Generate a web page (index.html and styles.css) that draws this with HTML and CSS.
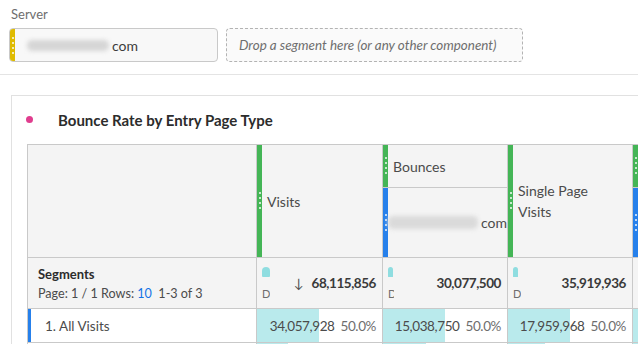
FILE: index.html
```html
<!DOCTYPE html>
<html lang="en">
<head>
  <meta charset="UTF-8" />
  <title>Bounce Rate by Entry Page Type</title>
  <link rel="stylesheet" href="styles.css">
</head>
<body>
  <div class="filters">
    <div class="filter-label">Server</div>
    <div class="filter-row">
      <div class="pill">
        <span class="pill-bar"><span class="grip"></span></span>
        <span class="blur blur-pill"></span>
        <span class="pill-text">com</span>
      </div>
      <div class="dropzone">Drop a segment here (or any other component)</div>
    </div>
  </div>

  <div class="panel">
    <div class="panel-title">
      <span class="dot"></span>
      <span>Bounce Rate by Entry Page Type</span>
    </div>

    <div class="table">
      <div class="cell head corner"></div>

      <div class="cell head span2">
        <span class="cbar green"><span class="grip"></span></span>
        <span class="head-label">Visits</span>
      </div>

      <div class="cell head">
        <span class="cbar green"><span class="grip"></span></span>
        <span class="head-label">Bounces</span>
      </div>

      <div class="cell head span2">
        <span class="cbar green"><span class="grip"></span></span>
        <span class="head-label two-line">Single Page<br>Visits</span>
      </div>

      <div class="cell head">
        <span class="cbar green"><span class="grip"></span></span>
      </div>

      <div class="cell head">
        <span class="cbar blue"><span class="grip"></span></span>
        <span class="head-label seg-label"><span class="blur blur-head"></span>com</span>
      </div>

      <div class="cell head">
        <span class="cbar blue"><span class="grip"></span></span>
      </div>

      <!-- summary row -->
      <div class="cell summary seg-info">
        <div class="seg-title">Segments</div>
        <div class="seg-pages">Page: 1 / 1 Rows: <span class="link">10</span>&nbsp;&nbsp;1-3 of 3</div>
      </div>
      <div class="cell summary total">
        <div class="mini"><span class="mini-icon"></span><span class="mini-text">De</span></div>
        <span class="sort">&#8595;</span>
        <span class="total-num">68,115,856</span>
      </div>
      <div class="cell summary total">
        <div class="mini narrow"><span class="mini-icon slim"></span><span class="mini-text">D</span></div>
        <span class="total-num">30,077,500</span>
      </div>
      <div class="cell summary total">
        <div class="mini"><span class="mini-icon slim"></span><span class="mini-text">D</span></div>
        <span class="total-num">35,919,936</span>
      </div>
      <div class="cell summary total"></div>

      <!-- data rows -->
      <div class="cell row-name selected">1. All Visits</div>
      <div class="cell value half"><span>34,057,928</span><span class="pct">50.0%</span></div>
      <div class="cell value half"><span>15,038,750</span><span class="pct">50.0%</span></div>
      <div class="cell value half"><span>17,959,968</span><span class="pct">50.0%</span></div>
      <div class="cell value half"></div>

      <div class="cell row-name"></div>
      <div class="cell value quarter"></div>
      <div class="cell value third"></div>
      <div class="cell value low"></div>
      <div class="cell value low"></div>
    </div>
  </div>
</body>
</html>
```

FILE: styles.css
```css
body {
  margin: 0;
  font-family: Lato, "Open Sans", sans-serif;
  color: #4b4b4b;
  background: #fff;
  overflow: hidden;
  width: 638px;
  height: 344px;
}

/* filter bar */
.filters {
  padding: 6px 0 12px 11px;
  border-bottom: 1px solid #e4e4e4;
}
.filter-label {
  font-size: 13px;
  line-height: 16px;
  color: #6e6e6e;
  margin-bottom: 6px;
}
.filter-row {
  display: flex;
  gap: 8px;
  margin-left: -2px;
}
.pill {
  width: 209px;
  height: 34px;
  box-sizing: border-box;
  display: flex;
  align-items: center;
  border: 1px solid #c9c9c9;
  border-radius: 4px;
  background: #f8f8f8;
  overflow: hidden;
}
.pill-bar {
  align-self: stretch;
  width: 5px;
  background: #dfbb00;
  display: flex;
  align-items: center;
  justify-content: center;
}
.pill-bar .grip {
  height: 17px;
}
.pill-text {
  font-size: 14px;
  color: #3c3c3c;
}
.blur {
  display: inline-block;
  background: #d6d6d6;
  filter: blur(2px);
  border-radius: 5px;
}
.blur-pill {
  width: 82px;
  height: 11px;
  margin: 0 3px 0 12px;
}
.dropzone {
  width: 297px;
  height: 34px;
  box-sizing: border-box;
  border: 1px dashed #b3b3b3;
  border-radius: 4px;
  background: #fafafa;
  display: flex;
  align-items: center;
  padding-left: 12px;
  font-size: 13.4px;
  font-style: italic;
  color: #6e6e6e;
}

/* panel */
.panel {
  margin: 20px 0 0 11px;
  width: 700px;
  border: 1px solid #e1e1e1;
}
.panel-title {
  height: 48px;
  display: flex;
  align-items: center;
  padding-left: 14px;
  font-size: 15px;
  font-weight: bold;
  color: #2c2c2c;
}
.dot {
  width: 7px;
  height: 7px;
  border-radius: 50%;
  background: #e03d8e;
  margin-right: 25px;
  margin-top: -2px;
}

/* table */
.table {
  margin-left: 15px;
  display: grid;
  grid-template-columns: 229px 126px 125px 125px 125px;
  grid-template-rows: 43px 70px 51px 34px 34px;
  border-top: 1px solid #c9c9c9;
}
.cell {
  border-left: 1px solid #c9c9c9;
  border-bottom: 1px solid #c9c9c9;
  box-sizing: border-box;
  overflow: hidden;
  white-space: nowrap;
}
.head {
  background: #f4f4f4;
  display: flex;
  font-size: 14px;
  color: #4b4b4b;
}
.corner,
.span2 {
  grid-row: span 2;
}
.cbar {
  width: 5px;
  flex-shrink: 0;
  display: flex;
  align-items: center;
  justify-content: center;
}
.green {
  background: #44b556;
}
.blue {
  background: #2680eb;
}
.grip {
  width: 2px;
  height: 18px;
  background: repeating-linear-gradient(to bottom, rgba(255, 255, 255, 0.7) 0 2px, transparent 2px 5px);
}
.head-label {
  display: flex;
  align-items: center;
  padding-left: 5px;
  line-height: 21px;
}
.two-line {
  white-space: normal;
}
.seg-label {
  padding-left: 0;
}
.blur-head {
  width: 90px;
  height: 13px;
  margin-right: 3px;
  background: #dadada;
}

/* summary row */
.summary {
  background: #f4f4f4;
}
.seg-info {
  padding: 8px 0 0 10px;
  font-size: 12.6px;
}
.seg-title {
  font-weight: bold;
  font-size: 13px;
  color: #2c2c2c;
  line-height: 16px;
}
.seg-pages {
  margin-top: 4px;
  line-height: 16px;
}
.link {
  color: #1473e6;
}
.total {
  display: flex;
  align-items: center;
  padding: 0 6px 0 5px;
}
.mini {
  width: 8px;
  align-self: stretch;
  display: flex;
  flex-direction: column;
  padding-top: 9px;
  overflow: hidden;
}
.mini.narrow {
  width: 6px;
}
.mini-icon {
  width: 8px;
  height: 10px;
  border-radius: 4px 4px 1px 1px;
  background: #8fdde0;
}
.mini-icon.slim {
  width: 5px;
}
.mini-text {
  font-size: 11px;
  line-height: 12px;
  color: #6e6e6e;
  margin-top: 11px;
}
.sort {
  margin-left: 24px;
  font-size: 13px;
  color: #505050;
}
.total-num {
  margin-left: auto;
  font-size: 13.5px;
  letter-spacing: -0.45px;
  font-weight: bold;
  color: #3a3a3a;
}

/* data rows */
.row-name {
  font-size: 13.5px;
  color: #4b4b4b;
  display: flex;
  align-items: center;
  padding-left: 17px;
}
.selected {
  box-shadow: inset 3px 0 0 #2680eb;
}
.value {
  display: flex;
  align-items: center;
  justify-content: flex-end;
  gap: 6px;
  padding-right: 6px;
  font-size: 13.5px;
  letter-spacing: -0.4px;
  color: #4b4b4b;
}
.pct {
  color: #6e6e6e;
}
.half {
  background: linear-gradient(to right, #b9eaec 50%, #fff 50%);
}
.quarter {
  background: linear-gradient(to right, #b9eaec 25%, #fff 25%);
}
.third {
  background: linear-gradient(to right, #b9eaec 35%, #fff 35%);
}
.low {
  background: linear-gradient(to right, #b9eaec 30%, #fff 30%);
}
```
